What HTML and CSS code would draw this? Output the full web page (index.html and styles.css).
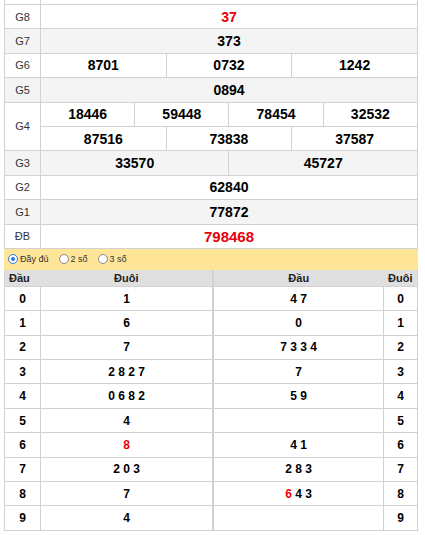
FILE: index.html
```html
<!DOCTYPE html>
<html lang="vi">
<head>
<meta charset="utf-8">
<link rel="stylesheet" href="styles.css">
</head>
<body>
<div class="page">
  <table class="kq">
    <colgroup>
      <col class="col-lbl">
      <col span="12" class="col-num">
    </colgroup>
    <tr class="top"><td></td><td colspan="12"></td></tr>
    <tr><td class="lbl">G8</td><td colspan="12" class="num red">37</td></tr>
    <tr class="alt"><td class="lbl">G7</td><td colspan="12" class="num">373</td></tr>
    <tr><td class="lbl">G6</td><td colspan="4" class="num">8701</td><td colspan="4" class="num">0732</td><td colspan="4" class="num">1242</td></tr>
    <tr class="alt"><td class="lbl">G5</td><td colspan="12" class="num">0894</td></tr>
    <tr><td class="lbl" rowspan="2">G4</td><td colspan="3" class="num">18446</td><td colspan="3" class="num">59448</td><td colspan="3" class="num">78454</td><td colspan="3" class="num">32532</td></tr>
    <tr><td colspan="4" class="num">87516</td><td colspan="4" class="num">73838</td><td colspan="4" class="num">37587</td></tr>
    <tr class="alt"><td class="lbl">G3</td><td colspan="6" class="num">33570</td><td colspan="6" class="num">45727</td></tr>
    <tr><td class="lbl">G2</td><td colspan="12" class="num">62840</td></tr>
    <tr class="alt"><td class="lbl">G1</td><td colspan="12" class="num">77872</td></tr>
    <tr><td class="lbl">ĐB</td><td colspan="12" class="num red big">798468</td></tr>
  </table>

  <div class="opts">
    <label class="opt"><span class="radio on"></span>Đầy đủ</label>
    <label class="opt"><span class="radio"></span>2 số</label>
    <label class="opt"><span class="radio"></span>3 số</label>
  </div>

  <div class="loto">
    <table class="lt lt-left">
      <colgroup><col class="l1"><col></colgroup>
      <tr class="head"><th class="hl">Đầu</th><th>Đuôi</th></tr>
      <tr><td>0</td><td>1</td></tr>
      <tr><td>1</td><td>6</td></tr>
      <tr><td>2</td><td>7</td></tr>
      <tr><td>3</td><td>2 8 2 7</td></tr>
      <tr><td>4</td><td>0 6 8 2</td></tr>
      <tr><td>5</td><td>4</td></tr>
      <tr><td>6</td><td class="red">8</td></tr>
      <tr><td>7</td><td>2 0 3</td></tr>
      <tr><td>8</td><td>7</td></tr>
      <tr><td>9</td><td>4</td></tr>
    </table>
    <table class="lt lt-right">
      <colgroup><col><col class="r2"></colgroup>
      <tr class="head"><th>Đầu</th><th>Đuôi</th></tr>
      <tr><td>4 7</td><td>0</td></tr>
      <tr><td>0</td><td>1</td></tr>
      <tr><td>7 3 3 4</td><td>2</td></tr>
      <tr><td>7</td><td>3</td></tr>
      <tr><td>5 9</td><td>4</td></tr>
      <tr><td></td><td>5</td></tr>
      <tr><td>4 1</td><td>6</td></tr>
      <tr><td>2 8 3</td><td>7</td></tr>
      <tr><td><span class="red">6</span> 4 3</td><td>8</td></tr>
      <tr><td></td><td>9</td></tr>
    </table>
  </div>
</div>
</body>
</html>
```

FILE: styles.css
```css
html, body {
  margin: 0;
  padding: 0;
  background: #fff;
}
body {
  font-family: "Liberation Sans", Arial, sans-serif;
  color: #000;
}
.page {
  width: 414px;
  margin-left: 4px;
}
table {
  border-collapse: collapse;
  table-layout: fixed;
  width: 414px;
}
.kq td {
  border: 1px solid #d2d2d2;
  padding: 0;
  height: 23.4px;
  text-align: center;
  vertical-align: middle;
}
.kq .col-lbl { width: 36px; }
.kq tr.top td {
  height: 4px;
  border-top: 0;
}
.kq tr.alt td { background: #f4f4f4; }
.kq td.lbl {
  font-size: 11px;
  color: #333;
}
.kq td.num {
  font-size: 14px;
  font-weight: bold;
}
.kq td.big { font-size: 15px; }
.red { color: #e8000b; }
.kq td.red { color: #e8000b; }

.opts {
  display: flex;
  align-items: center;
  height: 21px;
  background: #ffe598;
  padding-left: 4px;
  font-size: 9px;
  color: #333;
}
.opt {
  display: flex;
  align-items: center;
  margin-right: 10px;
}
.radio {
  width: 8px;
  height: 8px;
  border: 1px solid #8a8a8a;
  border-radius: 50%;
  background: #fff;
  margin-right: 2px;
  box-sizing: content-box;
  position: relative;
}
.radio.on {
  border-color: #2b79d8;
}
.radio.on::after {
  content: "";
  position: absolute;
  left: 2px;
  top: 2px;
  width: 4px;
  height: 4px;
  border-radius: 50%;
  background: #2b79d8;
}

.loto {
  display: flex;
}
.lt td, .lt th {
  border: 1px solid #d2d2d2;
  padding: 0;
  text-align: center;
  vertical-align: middle;
}
.lt th {
  height: 16px;
  font-size: 11px;
  font-weight: bold;
  background: #dfdfdf;
  border-left: 0;
  border-right: 0;
  border-top: 0;
  color: #222;
}
.lt th:first-child { border-left: 1px solid #d2d2d2; }
.lt th:last-child { border-right: 1px solid #d2d2d2; }
.lt th.hl {
  text-align: left;
  padding-left: 4px;
}
.lt td {
  height: 23.4px;
  font-size: 12px;
  font-weight: bold;
}
.lt-left { width: 209px; }
.lt-right { width: 205px; }
.lt-left .l1 { width: 36px; }
.lt-right .r2 { width: 34px; }
```
